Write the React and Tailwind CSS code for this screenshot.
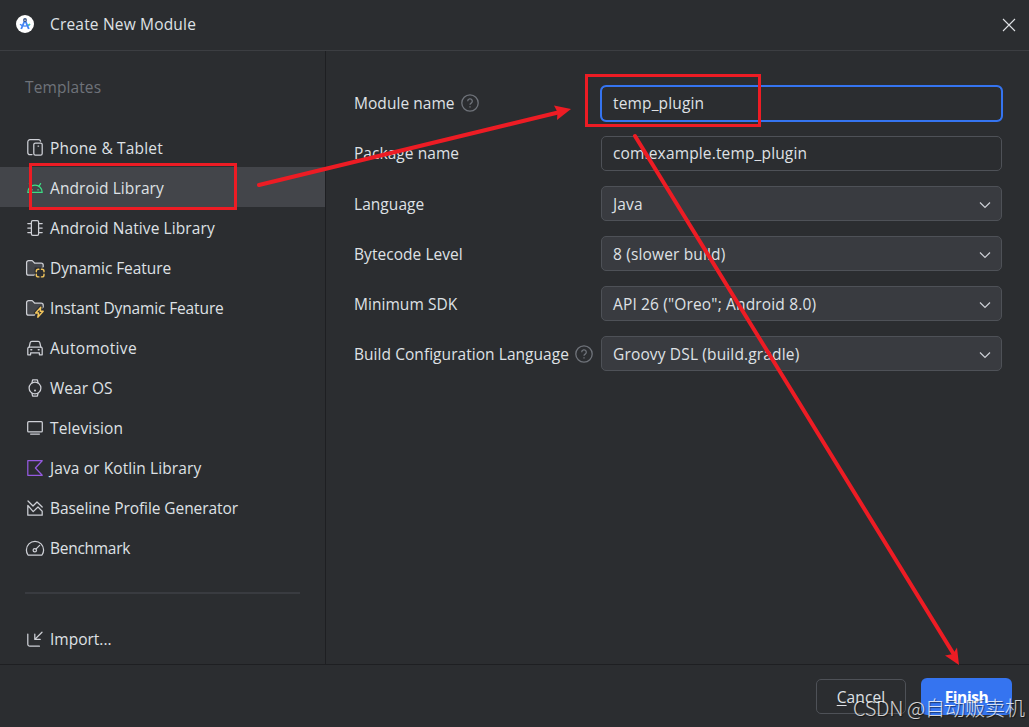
import React from 'react';

const Icon = ({ children, className = 'text-[#ced0d6]' }) => (
  <svg
    viewBox="0 0 20 20"
    className={`h-5 w-5 shrink-0 ${className}`}
    fill="none"
    stroke="currentColor"
    strokeWidth="1.25"
    strokeLinejoin="round"
    strokeLinecap="round"
  >
    {children}
  </svg>
);

const PhoneTabletIcon = () => (
  <Icon>
    <path d="M7 16.6H5a2.2 2.2 0 0 1-2.2-2.2V3.9A2.2 2.2 0 0 1 5 1.7h8.6a2.2 2.2 0 0 1 2 1.5" />
    <rect x="8.8" y="5" width="8.4" height="12" rx="1.6" />
    <path d="M13 8h.6" />
  </Icon>
);

const AndroidIcon = () => (
  <Icon className="text-[#3ddc84]">
    <path d="M2.8 14.4a7.2 7.2 0 0 1 14.4 0z" />
    <path d="M6.2 8.4 4.4 5.6M13.8 8.4 15.6 5.6M6.8 11.8h.5M12.8 11.8h.5" />
  </Icon>
);

const ChipIcon = () => (
  <Icon>
    <rect x="6.4" y="2.6" width="7.2" height="14.8" rx="1.4" />
    <path d="M2.8 5.5h3.6M2.8 10h3.6M2.8 14.5h3.6M13.6 5.5h3.6M13.6 10h3.6M13.6 14.5h3.6" />
  </Icon>
);

const Folder = () => (
  <path
    d="M9 17.2H3.6a2 2 0 0 1-2-2V4.6a2 2 0 0 1 2-2h3.6l2.6 2.6h6.4a2 2 0 0 1 2 2V9z"
    fill="#43454a"
  />
);

const DynamicFeatureIcon = () => (
  <Icon>
    <Folder />
    <rect x="9.6" y="9.4" width="10.4" height="10.6" fill="#2b2d30" stroke="none" />
    <path
      d="M11.3 13.8v-.6a2 2 0 0 1 2-2h.6M16.4 11.2h.6a2 2 0 0 1 2 2v.6M19 16.3v.6a2 2 0 0 1-2 2h-.6M13.9 18.9h-.6a2 2 0 0 1-2-2v-.6"
      stroke="#f2c55c"
      strokeWidth="1.4"
    />
  </Icon>
);

const InstantFeatureIcon = () => (
  <Icon>
    <Folder />
    <path d="M15.8 9.2 10.6 15h3l-.8 4.2 5.4-6h-3z" stroke="#2b2d30" strokeWidth="3.6" />
    <path d="M15.8 9.2 10.6 15h3l-.8 4.2 5.4-6h-3z" fill="#2b2d30" stroke="#f2c55c" strokeWidth="1.4" />
  </Icon>
);

const CarIcon = () => (
  <Icon>
    <path d="M4.2 9 5.2 4.6a1.7 1.7 0 0 1 1.7-1.3h6.2a1.7 1.7 0 0 1 1.7 1.3l1 4.4" />
    <path d="M4.4 9h11.2a1.6 1.6 0 0 1 1.6 1.6v6.2h-2.8v-2H5.6v2H2.8v-6.2A1.6 1.6 0 0 1 4.4 9z" />
    <path d="M5.9 11.8h.8M13.3 11.8h.8" strokeWidth="1.5" />
  </Icon>
);

const WatchIcon = () => (
  <Icon>
    <circle cx="10" cy="10" r="5.9" />
    <path d="M7 4.6 7.6 1.8h4.8l.6 2.8M7 15.4l.6 2.8h4.8l.6-2.8" />
    <path d="M10 12.4v.2" strokeWidth="1.9" />
  </Icon>
);

const TvIcon = () => (
  <Icon>
    <rect x="2.7" y="3.7" width="14.6" height="10.2" rx="1" />
    <path d="M5.6 16h8.8" />
  </Icon>
);

const KotlinIcon = () => (
  <Icon className="text-[#955ae0]">
    <path d="M2.8 2.7h14.4L10.4 10l6.8 7.3H2.8z" />
  </Icon>
);

const BaselineIcon = () => (
  <Icon>
    <path d="m3 3 5 5 4-4 5.2 5" />
    <path d="M2.8 7.4v9.8h14.4v-4L13 9l-4.8 4.6z" />
  </Icon>
);

const GaugeIcon = () => (
  <Icon>
    <path d="M3 17A8.7 8.7 0 0 1 1.4 12a8.6 8.6 0 0 1 17.2 0 8.7 8.7 0 0 1-1.6 5z" />
    <circle cx="9.8" cy="12.2" r="1.7" />
    <path d="M11.1 10.9 14.6 7.4" />
  </Icon>
);

const ImportIcon = () => (
  <Icon>
    <path d="M2.8 5v10.2a2 2 0 0 0 2 2h9.6" />
    <path d="M17 3.2 9.8 10.4M9.8 5v5.4h5.4" />
  </Icon>
);

const templates = [
  { label: 'Phone & Tablet', icon: PhoneTabletIcon, tracking: 'tracking-[0.17px]' },
  { label: 'Android Library', icon: AndroidIcon, active: true, tracking: 'tracking-[0.1px]' },
  { label: 'Android Native Library', icon: ChipIcon, tracking: 'tracking-[0.1px]' },
  { label: 'Dynamic Feature', icon: DynamicFeatureIcon, tracking: 'tracking-[-0.08px]' },
  { label: 'Instant Dynamic Feature', icon: InstantFeatureIcon, tracking: 'tracking-[-0.13px]' },
  { label: 'Automotive', icon: CarIcon, tracking: 'tracking-[0.32px]' },
  { label: 'Wear OS', icon: WatchIcon, tracking: '' },
  { label: 'Television', icon: TvIcon, tracking: 'tracking-[0.15px]' },
  { label: 'Java or Kotlin Library', icon: KotlinIcon, tracking: 'tracking-[0.1px]' },
  { label: 'Baseline Profile Generator', icon: BaselineIcon, tracking: 'tracking-[-0.07px]' },
  { label: 'Benchmark', icon: GaugeIcon, tracking: 'tracking-[-0.28px]' }
];

const fields = [
  { label: 'Module name', value: 'temp_plugin', help: true, type: 'focus' },
  { label: 'Package name', value: 'com.example.temp_plugin', type: 'text' },
  { label: 'Language', value: 'Java', type: 'select' },
  { label: 'Bytecode Level', value: '8 (slower build)', type: 'select' },
  { label: 'Minimum SDK', value: 'API 26 ("Oreo"; Android 8.0)', type: 'select' },
  { label: 'Build Configuration Language', value: 'Groovy DSL (build.gradle)', help: true, type: 'select' }
];

const boxStyles = {
  focus: 'border-[#3574f0] outline-2 -outline-offset-1 outline-[#3574f0] pb-0.5',
  text: 'border-[#4e5157] pb-0.5',
  select: 'border-[#4e5157] bg-[#393b40]'
};

const HelpIcon = () => (
  <svg viewBox="0 0 18 18" className="ml-1.5 h-[18px] w-[18px] text-[#6f737a]" fill="none" stroke="currentColor" strokeWidth="1.3">
    <circle cx="9" cy="9" r="8.2" />
    <path d="M6.7 7.2a2.3 2.3 0 1 1 3.5 1.9c-.8.5-1.2.9-1.2 1.7M9 12.2v1.3" />
  </svg>
);

const Header = () => (
  <header className="flex h-[51px] items-center border-b border-[#3c3e42] pl-4 pr-[13px] pb-0.5">
    <svg viewBox="0 0 18 18" className="h-[18px] w-[18px]" fill="none">
      <circle cx="9" cy="9" r="9" fill="#fff" />
      <path d="M9 5 5.2 14M9 5l3.8 9" stroke="#4285f4" strokeWidth="1.9" />
      <path d="M4 9.2c2.6 2.6 7.4 2.6 10 0" stroke="#4285f4" strokeWidth="1.3" />
      <path d="m12.6 10.2 1.4-1.2" stroke="#3ddc84" strokeWidth="1.5" />
      <circle cx="9" cy="5" r="1.9" fill="#35507f" />
      <circle cx="9" cy="5.2" r=".7" fill="#fff" />
    </svg>
    <h1 className="ml-4 tracking-[0.18px]">Create New Module</h1>
    <svg viewBox="0 0 14 14" className="ml-auto mt-0.5 h-3.5 w-3.5" stroke="#dfe1e5" strokeWidth="1.1">
      <path d="m1 1 12 12M13 1 1 13" />
    </svg>
  </header>
);

const Sidebar = () => (
  <aside className="flex w-[326px] shrink-0 flex-col border-r border-[#1e1f22]">
    <h2 className="mb-7 mt-6 pl-[25px] tracking-[0.1px] text-[#6f737a]">Templates</h2>
    <ul>
      {templates.map(({ label, icon: ItemIcon, active, tracking }) => (
        <li key={label} className={`flex h-10 items-center gap-[5px] pl-[25px] pt-0.5 ${active ? 'bg-[#43454a]' : ''}`}>
          <ItemIcon />
          <span className={tracking}>{label}</span>
        </li>
      ))}
    </ul>
    <hr className="mx-[25px] mt-[25px] border-t-2 border-[#393b40]" />
    <div className="mt-[25px] flex h-10 items-center gap-[5px] pl-[25px]">
      <ImportIcon />
      <span>Import...</span>
    </div>
  </aside>
);

const Field = ({ label, value, help, type }) => (
  <div className="flex h-[35px] items-center">
    <label className={`flex w-[247px] shrink-0 items-center tracking-[0.05px] ${type === 'select' ? '' : 'pb-0.5'}`}>
      {label}
      {help && <HelpIcon />}
    </label>
    <div className={`flex h-full grow items-center justify-between rounded-[5px] border pl-[11px] pr-2.5 ${boxStyles[type]}`}>
      <span className="tracking-[0.15px]">{value}</span>
      {type === 'select' && (
        <svg viewBox="0 0 12 8" className="mt-0.5 h-2 w-3" fill="none" stroke="#ced0d6" strokeWidth="1.2">
          <path d="m1 1.5 5 5 5-5" />
        </svg>
      )}
    </div>
  </div>
);

const Footer = () => (
  <footer className="flex h-[63px] justify-end gap-[15px] border-t border-[#1e1f22] pr-[17px] pt-3.5">
    <button className="flex h-[35px] w-[90px] items-center justify-center rounded-[5px] border border-[#4e5157]">
      <span className="tracking-[0.1px]"><span className="underline underline-offset-2">C</span>ancel</span>
    </button>
    <button className="-mt-px flex h-[37px] w-[91px] items-center justify-center rounded-[6px] bg-[#3574f0] font-bold text-white">
      <span className="tracking-[-0.4px]"><span className="underline underline-offset-2">F</span>inish</span>
    </button>
  </footer>
);

// Red callouts drawn over the dialog
const Annotations = () => (
  <svg viewBox="0 0 1029 727" className="pointer-events-none absolute inset-0 h-full w-full" fill="none" stroke="#ed1c24">
    <rect x="30.5" y="164.5" width="205" height="44" strokeWidth="3" />
    <rect x="586.5" y="75.5" width="173" height="50" strokeWidth="3" />
    <path d="M259 185 558 112.5" strokeWidth="4" strokeLinecap="round" />
    <path d="m571 109-17-3.5 3.5 6.5-.5 8z" fill="#ed1c24" stroke="none" />
    <path d="M635 136 953 653" strokeWidth="4" strokeLinecap="round" />
    <path d="m959 665-14-9.5 8-1.5 4-6.5z" fill="#ed1c24" stroke="none" />
  </svg>
);

const App = () => {
  return (
    <div className="relative flex h-[727px] w-[1029px] flex-col overflow-hidden bg-[#2b2d30] font-['Open_Sans','Noto_Sans_CJK_SC',sans-serif] text-[15.5px] leading-6 text-[#dfe1e5]">
      <Header />
      <div className="flex min-h-0 grow">
        <Sidebar />
        <main className="flex grow flex-col gap-[15px] pl-7 pr-[27px] pt-[35px]">
          {fields.map((field) => (
            <Field key={field.label} {...field} />
          ))}
        </main>
      </div>
      <Footer />
      <Annotations />
      <div className="absolute bottom-[7px] right-1 whitespace-nowrap font-['Noto_Sans_CJK_SC',sans-serif] text-[20px] font-light text-white/80 [text-shadow:1px_1px_1px_#0008]">
        <span className="tracking-[-0.3px]">CSDN @</span>自动贩卖机
      </div>
    </div>
  );
};

export default App;
